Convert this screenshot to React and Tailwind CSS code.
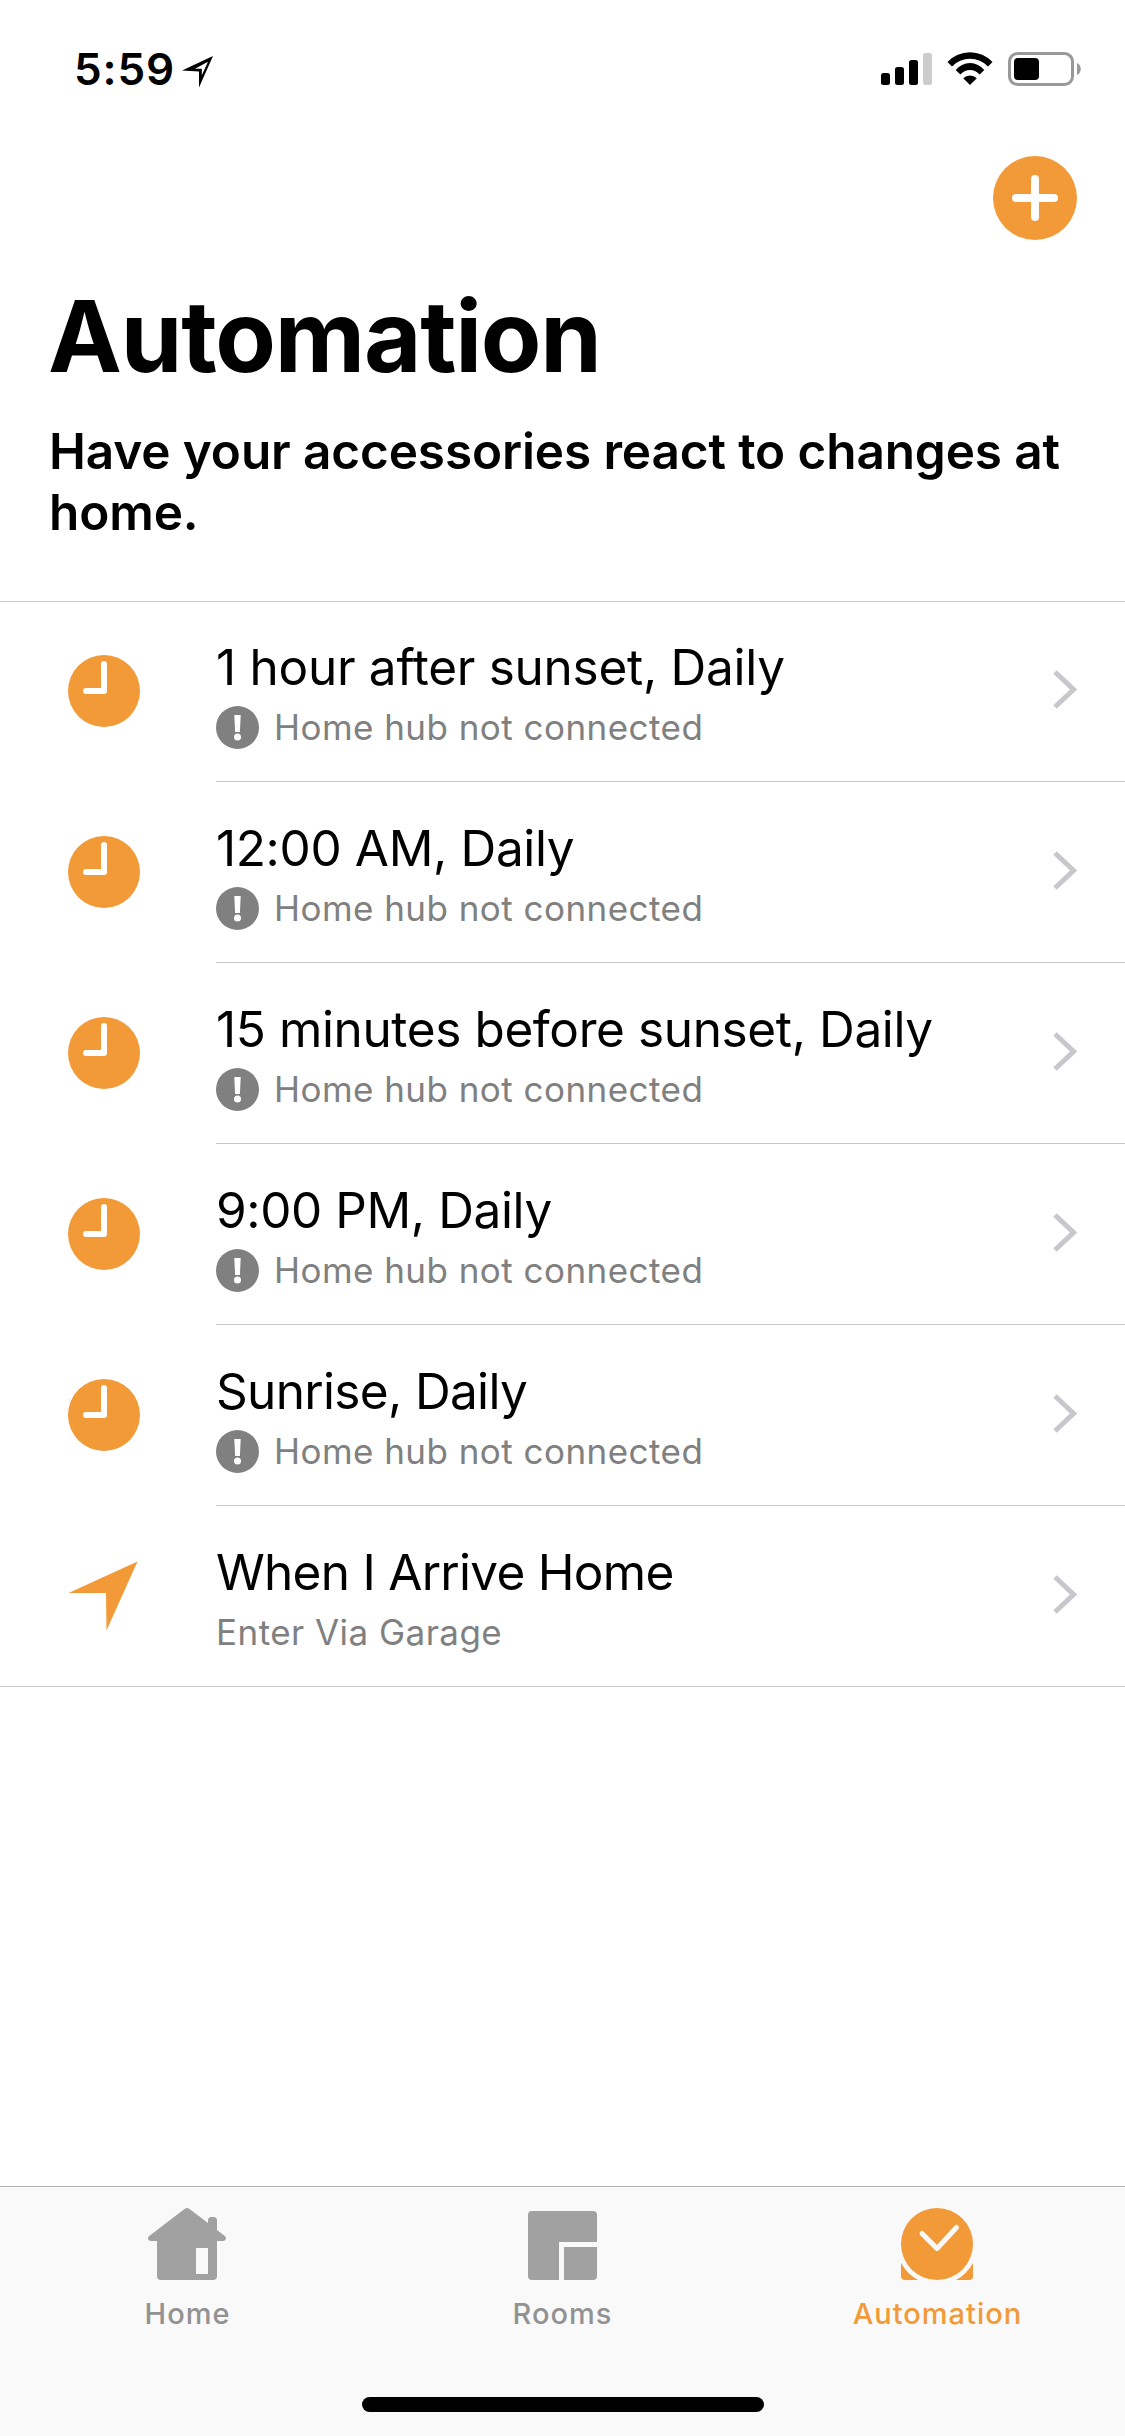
// App.jsx - Automation tab of the home app
import { useState } from 'react';

const AUTOMATIONS = [
  { id: 1, icon: 'clock', title: '1 hour after sunset, Daily', warning: 'Home hub not connected', tracking: 'tracking-[-0.28px]' },
  { id: 2, icon: 'clock', title: '12:00 AM, Daily', warning: 'Home hub not connected', tracking: 'tracking-[-0.35px]' },
  { id: 3, icon: 'clock', title: '15 minutes before sunset, Daily', warning: 'Home hub not connected', tracking: 'tracking-[-0.38px]' },
  { id: 4, icon: 'clock', title: '9:00 PM, Daily', warning: 'Home hub not connected', tracking: 'tracking-[-0.4px]' },
  { id: 5, icon: 'clock', title: 'Sunrise, Daily', warning: 'Home hub not connected', tracking: 'tracking-[-0.66px]' },
  { id: 6, icon: 'location', title: 'When I Arrive Home', detail: 'Enter Via Garage', tracking: 'tracking-[-0.72px]' },
];

// Status bar icons
const LocationOutline = () => (
  <svg className="mt-[11px] ml-[7px] h-8 w-8" viewBox="0 0 32 32" aria-hidden="true">
    <path
      fillRule="evenodd"
      d="M0 14.5 31 0 17 31.5V15.5ZM13 12.7h6.8v6.5L26 5.7Z"
      fill="#000"
    />
  </svg>
);

const Signal = () => (
  <svg className="h-[34px] w-[51px]" viewBox="0 0 51 34" aria-hidden="true">
    <rect x="0" y="21" width="9" height="12" rx="2.5" />
    <rect x="14" y="15" width="9" height="18" rx="2.5" />
    <rect x="28" y="8" width="9" height="25" rx="2.5" />
    <rect x="42" y="1" width="9" height="32" rx="2.5" fill="#ccc" />
  </svg>
);

const Wifi = () => (
  <svg className="ml-[15px] h-[34px] w-[46px]" viewBox="0 0 46 34" aria-hidden="true">
    <path d="M.5 10A31 31 0 0 1 45.5 10L41 14.5A25 25 0 0 0 5 14.5Z" />
    <path d="M8.7 18A18.2 18.2 0 0 1 37.3 18L32.7 22.6A12.5 12.5 0 0 0 13.3 22.6Z" />
    <path d="M16.2 26.3A9.5 9.5 0 0 1 29.8 26.3L23 33Z" />
  </svg>
);

const Battery = () => (
  <svg className="ml-[15px] h-[34px] w-[74px]" viewBox="0 0 74 34" aria-hidden="true">
    <rect x="1.5" y="1.5" width="63" height="31" rx="8" fill="none" stroke="#999" strokeWidth="3" />
    <rect x="6" y="6" width="25" height="22" rx="4" />
    <path d="M69 11c5 2 5 10 0 12Z" fill="#999" />
  </svg>
);

// List icons
const ClockIcon = () => (
  <svg className="h-[72px] w-[72px]" viewBox="0 0 72 72" aria-hidden="true">
    <circle cx="36" cy="36" r="36" fill="#f19a37" />
    <path d="M36 9v27H18" fill="none" stroke="#fff" strokeWidth="6" strokeLinecap="round" strokeLinejoin="round" />
  </svg>
);

const LocationIcon = () => (
  <svg className="h-[72px] w-[72px]" viewBox="0 0 72 72" aria-hidden="true">
    <path d="M.5 33 69.5 1.5 38.5 70.5 38 33Z" fill="#f19a37" />
  </svg>
);

const WarningIcon = () => (
  <svg className="mt-px mr-[15px] h-[43px] w-[43px]" viewBox="0 0 43 43" aria-hidden="true">
    <circle cx="21.5" cy="21.5" r="21.5" fill="#808080" />
    <path d="M18.3 9h6.4l-.8 17h-4.8Z" fill="#fff" />
    <circle cx="21.5" cy="31" r="3.5" fill="#fff" />
  </svg>
);

const Chevron = () => (
  <svg className="mt-[69px] mr-12 ml-auto h-[39px] w-6" viewBox="0 0 24 39" aria-hidden="true">
    <path d="M2 2 20.5 19.5 2 37" fill="none" stroke="#c7c7cc" strokeWidth="5" />
  </svg>
);

// Tab bar icons
const HomeTabIcon = () => (
  <svg className="mr-px h-[72px] w-[78px]" viewBox="0 0 78 72" fill="currentColor" aria-hidden="true">
    <path
      fillRule="evenodd"
      d="M36.5 1Q39 -.8 41.5 1L60 15V12.5Q60 9 63.5 9H65.5Q69 9 69 12.5V22L76.5 27.800C79.5 30.3 77.5 33 75 33H69V68Q69 72 65 72H13Q9 72 9 68V33H3C.5 33 -1.5 30.3 1.5 27.8ZM48 40V66H60V40Z"
    />
  </svg>
);

const RoomsTabIcon = () => (
  <svg className="h-[72px] w-[69px]" viewBox="0 -3 69 72" fill="currentColor" aria-hidden="true">
    <path d="M4 0H65Q69 0 69 4V31H31V69H4Q0 69 0 65V4Q0 0 4 0Z" />
    <path d="M36 36H69V65Q69 69 65 69H36Z" />
  </svg>
);

const AutomationTabIcon = () => (
  <svg className="mr-px h-[72px] w-[72px]" viewBox="0 0 72 72" fill="currentColor" aria-hidden="true">
    <circle cx="36" cy="36" r="36" />
    <path d="M0 55Q6 66 17 72H4Q0 72 0 68ZM72 55Q66 66 55 72H68Q72 72 72 68Z" />
    <path d="M21 25.5 36 40.5 55.5 19.5" fill="none" stroke="#f9f9f9" strokeWidth="5" strokeLinecap="round" strokeLinejoin="round" />
  </svg>
);

const TABS = [
  { id: 'home', label: 'Home', icon: HomeTabIcon },
  { id: 'rooms', label: 'Rooms', icon: RoomsTabIcon },
  { id: 'automation', label: 'Automation', icon: AutomationTabIcon },
];

const StatusBar = () => (
  <div className="flex h-[156px] items-start pt-[45px] pr-[43px] pl-[74px]">
    <span className="text-[44px] leading-[48px] font-semibold tracking-[0.9px]">5:59</span>
    <LocationOutline />
    <div className="mt-[7px] ml-auto flex">
      <Signal />
      <Wifi />
      <Battery />
    </div>
  </div>
);

const AutomationRow = ({ item, isLast }) => (
  <li className="flex h-[181px] items-start">
    <div className="mt-[54px] ml-[68px] shrink-0">
      {item.icon === 'clock' ? <ClockIcon /> : <LocationIcon />}
    </div>
    <div className={`ml-[76px] flex h-full flex-1 items-start border-[#c8c7cc] ${isLast ? '' : 'border-b'}`}>
      <div className="pt-9">
        <p className={`text-[49.5px] leading-[60px] whitespace-nowrap ${item.tracking}`}>{item.title}</p>
        <div className="mt-2 flex items-start text-[35px] leading-[44px] tracking-[0.46px] text-[#808080]">
          {item.warning && <WarningIcon />}
          <span className="whitespace-nowrap">{item.warning || item.detail}</span>
        </div>
      </div>
      <Chevron />
    </div>
  </li>
);

const TabBar = ({ active, onSelect }) => (
  <nav className="mt-auto flex h-[250px] flex-col border-t border-[#b2b2b2] bg-[#f9f9f9]">
    <div className="grid grid-cols-3">
      {TABS.map(({ id, label, icon: Icon }) => (
        <button
          key={id}
          onClick={() => onSelect(id)}
          className={`flex flex-col items-center pt-[21px] ${active === id ? 'text-[#f19a37]' : 'text-[#a1a1a1]'}`}
        >
          <Icon />
          <span className={`mt-4 text-[29px] leading-[36px] font-medium tracking-[1px] ${active === id ? '' : 'text-[#929292]'}`}>
            {label}
          </span>
        </button>
      ))}
    </div>
    <div className="mx-auto mt-auto mb-6 h-[15px] w-[402px] rounded-full bg-black" />
  </nav>
);

export default function App() {
  const [activeTab, setActiveTab] = useState('automation');

  return (
    <div className="flex h-[2436px] w-[1125px] flex-col overflow-hidden bg-white font-['Inter',sans-serif] text-black">
      <header className="h-[601px]">
        <StatusBar />
        <div className="flex justify-end pr-12">
          <button aria-label="Add automation" className="flex h-[84px] w-[84px] items-center justify-center rounded-full bg-[#f19a37]">
            <svg className="h-[46px] w-[46px]" viewBox="0 0 46 46" aria-hidden="true">
              <path d="M23 4v38M4 23h38" stroke="#fff" strokeWidth="8" strokeLinecap="round" />
            </svg>
          </button>
        </div>
        <h1 className="mt-9 ml-12 text-[99px] leading-[120px] font-bold tracking-[-1.2px]">Automation</h1>
        <p className="mt-[25px] ml-[49px] text-[49.5px] leading-[61px] font-semibold tracking-[-0.12px]">
          Have your accessories react to changes at
          <br />
          home.
        </p>
      </header>

      <ul className="h-[1086px] border-b border-[#c8c7cc] shadow-[inset_0_1px_0_#c8c7cc]">
        {AUTOMATIONS.map((item, i) => (
          <AutomationRow key={item.id} item={item} isLast={i === AUTOMATIONS.length - 1} />
        ))}
      </ul>

      <TabBar active={activeTab} onSelect={setActiveTab} />
    </div>
  );
}
